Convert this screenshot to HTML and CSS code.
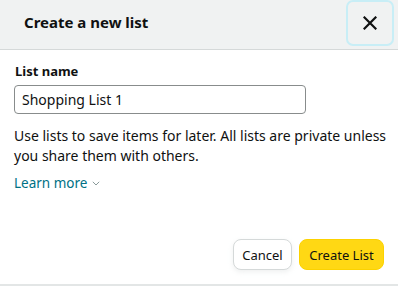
FILE: index.html
```html
<!DOCTYPE html>
<html>
<head>
<meta charset="utf-8">
<link rel="stylesheet" href="styles.css">
</head>
<body>
<div class="dialog">
  <div class="header">
    <h2 class="title">Create a new list</h2>
    <button class="close" aria-label="Close">
      <svg width="14" height="14" viewBox="0 0 14 14"><path d="M1.5 1.5 L12.5 12.5 M12.5 1.5 L1.5 12.5" stroke="#0f1111" stroke-width="2.2" stroke-linecap="square" fill="none"/></svg>
    </button>
  </div>
  <div class="body">
    <label class="label" for="name">List name</label>
    <input id="name" class="input" type="text" value="Shopping List 1">
    <p class="desc">Use lists to save items for later. All lists are private unless you share them with others.</p>
    <a class="learn" href="#">Learn more <svg class="chev" width="8" height="5" viewBox="0 0 8 5"><path d="M0.8 0.8 L4 4 L7.2 0.8" stroke="#8a9a9a" stroke-width="1" fill="none"/></svg></a>
  </div>
  <div class="footer">
    <button class="btn cancel">Cancel</button>
    <button class="btn primary">Create List</button>
  </div>
</div>
</body>
</html>
```
FILE: styles.css
```css
html, body {
  margin: 0;
  padding: 0;
  background: #fff;
}
body {
  font-family: "Noto Sans", "Open Sans", sans-serif;
  color: #0f1111;
}
.dialog {
  width: 398px;
  height: 286px;
  box-sizing: border-box;
  display: flex;
  flex-direction: column;
  background: #fff;
  border-bottom: 2px solid #e3e6e6;
}
.header {
  height: 49px;
  flex: none;
  background: #f0f2f2;
  border-bottom: 1px solid #d5d9d9;
  display: flex;
  align-items: flex-start;
  justify-content: space-between;
}
.title {
  margin: 0;
  padding: 10px 0 0 24px;
  font-size: 15px;
  font-weight: 700;
  line-height: 24px;
}
.close {
  margin: 0 4px 0 0;
  width: 48px;
  height: 46px;
  box-sizing: border-box;
  border: 2px solid #c8eef6;
  border-radius: 7px;
  background: #f0f2f2;
  display: flex;
  align-items: center;
  justify-content: center;
  padding: 0;
}
.body {
  flex: 1;
  padding: 13px 8px 0 14px;
  display: flex;
  flex-direction: column;
  align-items: flex-start;
}
.label {
  font-size: 13px;
  font-weight: 700;
  line-height: 17px;
  padding-left: 1px;
}
.input {
  margin-top: 5px;
  width: 292px;
  height: 29px;
  box-sizing: border-box;
  border: 1px solid #888c8c;
  border-radius: 4px;
  padding: 0 7px;
  font-family: "Noto Sans", "Open Sans", sans-serif;
  font-size: 14px;
  color: #0f1111;
}
.desc {
  margin: 12px 0 0 0;
  font-size: 14px;
  line-height: 20px;
}
.learn {
  margin-top: 7px;
  font-size: 13.5px;
  line-height: 20px;
  color: #007185;
  text-decoration: none;
  display: flex;
  align-items: center;
  gap: 5px;
}
.chev {
  margin-top: 1px;
}
.footer {
  display: flex;
  justify-content: flex-end;
  gap: 7px;
  padding: 0 14px 14px 0;
}
.btn {
  height: 31px;
  box-sizing: border-box;
  border-radius: 8px;
  font-family: "Noto Sans", "Open Sans", sans-serif;
  font-size: 13px;
  color: #0f1111;
  padding: 0;
}
.cancel {
  width: 59px;
  background: #fff;
  border: 1px solid #d5d9d9;
  box-shadow: 0 2px 5px rgba(213,217,217,0.4);
}
.primary {
  width: 85px;
  background: #ffd814;
  border: 1px solid #fcd200;
}
```
